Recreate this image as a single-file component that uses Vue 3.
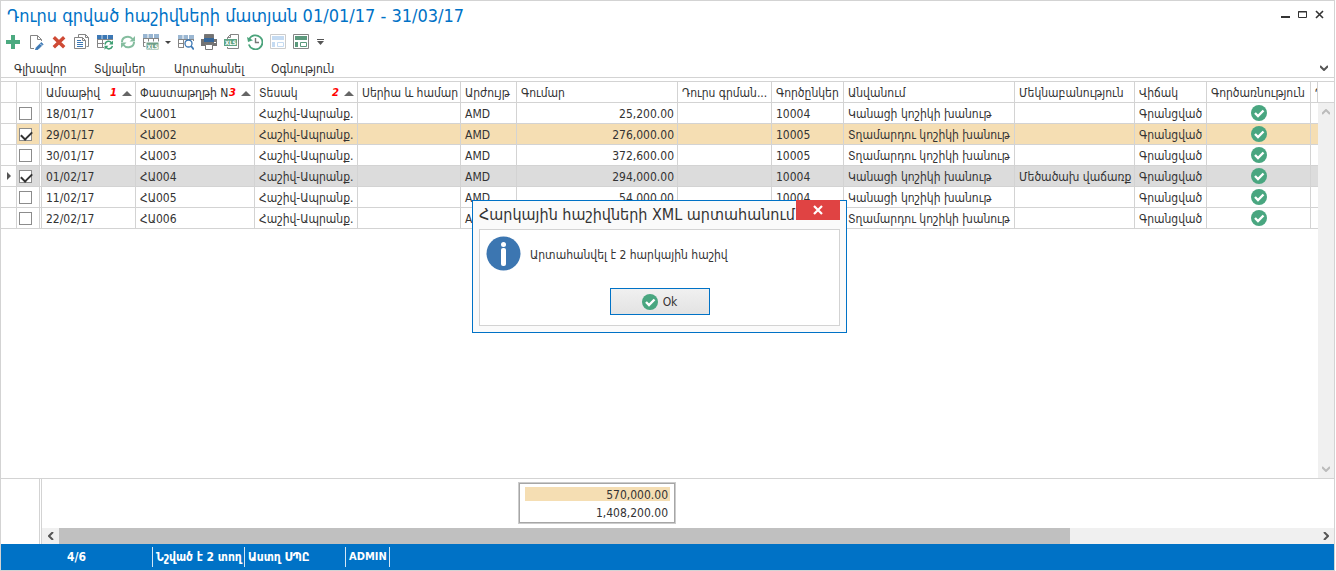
<script setup>
import { ref } from 'vue'

const columns = [
  { key: 'date', label: 'Ամսաթիվ', sort: 1 },
  { key: 'doc', label: 'Փաստաթղթի N', sort: 3 },
  { key: 'type', label: 'Տեսակ', sort: 2 },
  { key: 'serial', label: 'Սերիա և համար' },
  { key: 'currency', label: 'Արժույթ' },
  { key: 'amount', label: 'Գումար' },
  { key: 'written', label: 'Դուրս գրման...' },
  { key: 'partner', label: 'Գործընկեր' },
  { key: 'name', label: 'Անվանում' },
  { key: 'comment', label: 'Մեկնաբանություն' },
  { key: 'state', label: 'Վիճակ' },
  { key: 'operation', label: 'Գործառնություն' },
  { key: 'tail', label: 'Դ' }
]

const women = { partner: '10004', name: 'Կանացի կոշիկի խանութ' }
const men = { partner: '10005', name: 'Տղամարդու կոշիկի խանութ' }
const common = { type: 'Հաշիվ-Ապրանք.', currency: 'AMD', state: 'Գրանցված', serial: '', written: '', comment: '', tail: '' }

const rows = ref([
  { ...common, date: '18/01/17', doc: 'ՀԱ001', amount: '25,200.00', ...women, checked: false },
  { ...common, date: '29/01/17', doc: 'ՀԱ002', amount: '276,000.00', ...men, checked: true },
  { ...common, date: '30/01/17', doc: 'ՀԱ003', amount: '372,600.00', ...men, checked: false },
  { ...common, date: '01/02/17', doc: 'ՀԱ004', amount: '294,000.00', ...women, checked: true, current: true, comment: 'Մեծածախ վաճառք' },
  { ...common, date: '11/02/17', doc: 'ՀԱ005', amount: '54,000.00', ...women, checked: false },
  { ...common, date: '22/02/17', doc: 'ՀԱ006', amount: '386,400.00', ...men, checked: false }
])
</script>

<template>
  <div class="window">
    <header class="titlebar">
      <h1>Դուրս գրված հաշիվների մատյան 01/01/17 - 31/03/17</h1>
      <div class="window-buttons">
        <button aria-label="Minimize"><svg width="9" height="9"><path d="M0 7h9" stroke="#333" stroke-width="2" /></svg></button>
        <button aria-label="Maximize"><svg width="9" height="9"><path d="M.5 1.5h8v6h-8zM0 2h9" fill="none" stroke="#333" /></svg></button>
        <button aria-label="Close"><svg width="9" height="9"><path d="M1 1l7 7M8 1l-7 7" stroke="#333" stroke-width="1.6" /></svg></button>
      </div>
    </header>

    <div class="toolbar">
      <button aria-label="Add"><svg class="icon" viewBox="0 0 16 16"><path d="M6 1h4v5h5v4h-5v5h-4v-5h-5v-4h5z" fill="#4caa80" /></svg></button>
      <button aria-label="Edit"><svg class="icon" viewBox="0 0 16 16" fill="none"><path d="M6 14.5H2.500V1.500h7l4 4V7M9.500 1.500v4h4" stroke="#858585" /><path d="M8.300 13.500L13.300 8.500l1.800 1.800-5 5-2.700.8z" fill="#3c78b5" stroke="#3c78b5" stroke-width=".8" /><path d="M12 9.600l2 2" stroke="#fff" stroke-width=".8" /></svg></button>
      <button aria-label="Delete"><svg class="icon" viewBox="0 0 16 16"><path d="M2.800 3.200l10.400 10M13.200 3.200l-10.400 10" stroke="#cf4a35" stroke-width="3.400" /></svg></button>
      <button aria-label="Copy"><svg class="icon" viewBox="0 0 16 16" fill="none"><path d="M4.500 3V.500h7l3 3v9h-2M11.500.500v3h3" stroke="#858585" /><path d="M.500 3.500h8l3 3v8h-11zM8.500 3.500v3h3" fill="#fff" stroke="#858585" /><path d="M3 6.500h4M3 8.500h6M3 10.500h6M3 12.500h6" stroke="#3c78b5" /></svg></button>
      <button aria-label="Refresh table"><svg class="icon" viewBox="0 0 16 16" fill="none"><path d="M.500 1.500h15v12h-15zM.500 5.500h15M.500 9.500h15M5.500 1.500v12M10.500 1.500v12" stroke="#858585" /><path d="M0 1h16v4h-16z" fill="#3c78b5" /><path d="M5 1v4M10.500 1v4" stroke="#c7d9ea" /><path d="M7 6h9v10h-9z" fill="#fff" /><path d="M8 10.500c.7-4 5-4 6.500-1.500M15.500 12c-1 3.500-5 3.700-6.500 1.200" stroke="#3e9f73" stroke-width="1.500" /><path d="M16 6.500v4h-4zM7.500 15.700v-4h4z" fill="#3e9f73" /></svg></button>
      <button aria-label="Refresh"><svg class="icon" viewBox="0 0 16 16" fill="none"><path d="M2 8c0-5.500 7.500-7 10.500-3M14 8c0 5.500-7.500 7-10.500 3" stroke="#85bd9f" stroke-width="2" /><path d="M15 2v5.500h-5.500zM1 14v-5.500h5.500z" fill="#85bd9f" /></svg></button>
      <button class="with-arrow" aria-label="Export table"><svg class="icon" viewBox="0 0 16 16" fill="none"><path d="M.500.500h15v12h-15zM.500 4.500h15M.500 8.500h15M5.500.500v12M10.500.500v12" stroke="#858585" /><path d="M0 0h16v4h-16z" fill="#98b5d1" /><path d="M5 0v4M10.500 0v4" stroke="#fff" /><path d="M3 8h13v8h-13z" fill="#6f9f86" stroke="#fff" /><text x="4" y="15" font-size="6" font-weight="700" fill="#fff">XLS</text></svg><svg class="arrow" viewBox="0 0 12 16"><path d="M6 7h6l-3 3z" fill="#444" /></svg></button>
      <button aria-label="Find in table"><svg class="icon" viewBox="0 0 16 16" fill="none"><path d="M.500 1.500h15v12h-15zM.500 5.500h15M.500 9.500h15M5.500 1.500v12M10.500 1.500v12" stroke="#858585" /><path d="M0 1h16v4h-16z" fill="#9bb7d2" /><path d="M5 1v4M10.500 1v4" stroke="#fff" /><path d="M6 7h10v9h-10z" fill="#fff" /><circle cx="10.500" cy="9.500" r="3.500" fill="#fff" stroke="#3c78b5" stroke-width="1.300" /><path d="M13 12l2.800 3.500" stroke="#3c78b5" stroke-width="1.800" /></svg></button>
      <button aria-label="Print"><svg class="icon" viewBox="0 0 16 16"><path d="M3.500.500h9v4h-9z" fill="#737373" stroke="#777" /><path d="M0 5h16v7h-16z" fill="#737373" /><path d="M3 4h10v4h-10z" fill="#35679b" /><path d="M4.500 10.500h7v5h-7z" fill="#fff" stroke="#777" /><path d="M13 8.500h2" stroke="#fff" /></svg></button>
      <button aria-label="Export to XLS"><svg class="icon" viewBox="0 0 16 16" fill="none"><path d="M3.500 5V3.500l3-3h8v14h-11V13M3.500 3.500h3v-3" stroke="#858585" /><path d="M0 5h13v7H0z" fill="#5fa383" /><text x="1" y="11" font-size="6" font-weight="700" fill="#fff">XLS</text></svg></button>
      <button aria-label="History"><svg class="icon" viewBox="0 0 16 16" fill="none"><path d="M2.200 5.200A7 7 0 1 1 1.800 10.500" stroke="#4ba37b" stroke-width="1.800" /><path d="M0 3l1 5 5-1.800z" fill="#4ba37b" /><path d="M8.500 4v4.500H12" stroke="#777" stroke-width="1.400" /></svg></button>
      <button aria-label="Preview" disabled><svg class="icon" viewBox="0 0 16 16" fill="none"><path d="M.500.500h15v14h-15z" stroke="#ccc" /><path d="M2 2h12v4h-12z" fill="#c5dbf2" /><path d="M2 8h3v5h-3z" fill="#c5dbf2" /><path d="M7.500 8.500h6v4h-6z" stroke="#c5dbf2" /></svg></button>
      <button aria-label="Layout"><svg class="icon" viewBox="0 0 16 16" fill="none"><path d="M.500.500h15v14h-15z" stroke="#858585" /><path d="M2 2h12v4h-12z" fill="#5b997c" /><path d="M2 8h3v5h-3z" fill="#5b997c" /><path d="M7.500 8.500h6v4h-6z" stroke="#5b997c" /></svg></button>
      <button aria-label="More commands"><svg class="icon" viewBox="0 0 16 16"><path d="M1 5.500h7" stroke="#555" /><path d="M1 7h7l-3.500 4z" fill="#555" /></svg></button>
    </div>

    <nav class="menu">
      <div><button>Գլխավոր</button></div>
      <div><button>Տվյալներ</button></div>
      <div><button>Արտահանել</button></div>
      <div><button>Օգնություն</button></div>
      <button class="expand" aria-label="Expand ribbon"><svg width="8" height="6"><path d="M0 1l4 4 4-4" fill="none" stroke="#555" stroke-width="2" /></svg></button>
    </nav>

    <main class="grid">
      <div class="table-wrap">
        <table>
          <colgroup>
            <col class="w-mark" /><col class="w-check" />
            <col v-for="c in columns" :key="c.key" :class="'w-' + c.key" />
          </colgroup>
          <thead>
            <tr>
              <th></th>
              <th class="check"></th>
              <th v-for="c in columns" :key="c.key" :class="'c-' + c.key">
                <div class="head">
                  <span class="label">{{ c.label }}</span>
                  <span v-if="c.sort" class="order">{{ c.sort }}</span>
                  <svg v-if="c.sort" class="sort" width="10" height="5"><path d="M0 5l5-5 5 5z" fill="#666" /></svg>
                </div>
              </th>
            </tr>
          </thead>
          <tbody>
            <tr v-for="r in rows" :key="r.doc" :class="{ selected: r.checked && !r.current, current: r.current }">
              <td class="mark"><svg v-if="r.current" width="4" height="8"><path d="M0 0l4 4-4 4z" fill="#555" /></svg></td>
              <td class="check"><input v-model="r.checked" type="checkbox" :aria-label="r.doc" /></td>
              <td v-for="c in columns" :key="c.key" :class="'c-' + c.key">
                <svg v-if="c.key === 'operation'" class="icon" viewBox="0 0 16 16"><circle cx="8" cy="8" r="8" fill="#49a680" /><path d="M4 8l3 3 5.500-5.500" fill="none" stroke="#fff" stroke-width="2.400" /></svg>
                <template v-else>{{ r[c.key] }}</template>
              </td>
            </tr>
          </tbody>
        </table>
      </div>
      <div class="side">
        <div class="side-head"></div>
        <div class="v-scroll">
          <svg width="8" height="6"><path d="M0 5l4-4 4 4" fill="none" stroke="#bbb" stroke-width="2" /></svg>
          <svg width="8" height="6"><path d="M0 1l4 4 4-4" fill="none" stroke="#bbb" stroke-width="2" /></svg>
        </div>
      </div>
    </main>

    <section class="totals">
      <div class="gutter"></div>
      <div class="totals-body">
        <div class="summary">
          <div class="picked">570,000.00</div>
          <div>1,408,200.00</div>
        </div>
        <div class="h-scroll">
          <svg width="6" height="8"><path d="M5 0l-4 4 4 4" fill="none" stroke="#555" stroke-width="2" /></svg>
          <div class="track"><div class="thumb"></div></div>
          <svg width="6" height="8"><path d="M1 0l4 4-4 4" fill="none" stroke="#555" stroke-width="2" /></svg>
        </div>
      </div>
    </section>

    <footer class="status">
      <span class="position">4/6</span>
      <span class="marked">Նշված է 2 տող</span>
      <span class="company">Աստղ ՍՊԸ</span>
      <span class="user">ADMIN</span>
    </footer>

    <div class="dialog" role="dialog" aria-labelledby="dialog-title">
      <div class="dialog-bar">
        <h2 id="dialog-title">Հարկային հաշիվների XML արտահանում</h2>
        <button class="close" aria-label="Close dialog"><svg width="10" height="10"><path d="M1 1l8 8M9 1l-8 8" stroke="#fff" stroke-width="2.200" /></svg></button>
      </div>
      <div class="dialog-body">
        <div class="message">
          <svg width="35" height="35" viewBox="0 0 35 35"><circle cx="17.500" cy="17.500" r="17" fill="#3c76b1" /><circle cx="17.500" cy="8.500" r="2.500" fill="#fff" /><rect x="15" y="12" width="5" height="18" rx="2" fill="#fff" /></svg>
          <p>Արտահանվել է 2 հարկային հաշիվ</p>
        </div>
        <button class="ok"><svg class="icon" viewBox="0 0 16 16"><circle cx="8" cy="8" r="8" fill="#49a680" /><path d="M4 8l3 3 5.500-5.500" fill="none" stroke="#fff" stroke-width="2.400" /></svg>Ok</button>
      </div>
    </div>
  </div>
</template>

<style>
body { margin: 0; background: #fff; }
</style>

<style scoped>
* { box-sizing: border-box; }
.window {
  position: relative;
  display: flex;
  flex-direction: column;
  min-height: 100vh;
  margin-right: 1px;
  border: 1px solid #d3d3d3;
  overflow: hidden;
  color: #333;
  font: 12px/16px "DejaVu Sans Condensed", "DejaVu Sans", sans-serif;
}
button { padding: 0; border: 0; background: none; color: inherit; font: inherit; }
svg { display: block; flex: none; }
.icon { width: 16px; height: 16px; }
h1, h2, p { margin: 0; font-weight: 400; white-space: nowrap; }

.titlebar { display: flex; justify-content: space-between; height: 30px; padding: 3px 10px 0 6px; }
h1 { color: #0072c6; font-size: 18px; line-height: 24px; }
.window-buttons { display: flex; gap: 8px; height: 20px; align-items: center; }

.toolbar { display: flex; gap: 7px; height: 22px; padding: 3px 4px; }
.with-arrow { display: flex; }
.arrow { width: 12px; height: 16px; }

.menu { display: grid; grid-template-columns: 80px 80px 97px 1fr auto; align-items: end; padding: 7px 6px 0 13px; border-bottom: 1px solid #d3d3d3; height: 25px; }
.expand { padding-bottom: 6px; }

.grid { display: flex; flex: 1; margin-top: 3px; border-top: 1px solid #d3d3d3; }
.table-wrap { flex: 1; min-width: 0; overflow: hidden; }
table { width: 100%; table-layout: fixed; border-spacing: 0; }
.w-mark { width: 16px; }
.w-check { width: 25px; }
.w-date, .w-written { width: 94px; }
.w-doc { width: 119px; }
.w-type, .w-serial { width: 103px; }
.w-currency { width: 56px; }
.w-amount { width: 161px; }
.w-partner, .w-state { width: 72px; }
.w-name { width: 171px; }
.w-comment { width: 120px; }
.w-operation { width: 104px; }
th, td {
  height: 21px;
  padding: 2px 3px 0 4px;
  border: 0 solid #d3d3d3;
  border-width: 0 1px 1px 0;
  overflow: hidden;
  background-clip: padding-box;
  font-weight: 400;
  line-height: 18px;
  text-align: left;
  white-space: nowrap;
}
th { padding-right: 0; }
.check { padding: 0 0 0 2px; border-right: 3px double #d3d3d3; }
.mark { padding: 0 0 0 6px; }
td.c-tail { border-right: 0; }
td.c-amount { text-align: right; }
td.c-operation { padding-top: 0; }
td.c-operation .icon { margin: 0 auto; }
.selected td:not(.mark) { background-color: #f5deb3; }
.current td:not(.mark) { background-color: #dcdcdc; }
.head { display: flex; align-items: center; }
.label { flex: 1; min-width: 0; overflow: hidden; }
.order { margin-right: 5px; color: #f00; font: italic 700 10px/16px "DejaVu Sans", sans-serif; }
.sort { margin-right: 3px; }
input {
  display: block;
  appearance: none;
  width: 13px;
  height: 13px;
  margin: 0;
  border: 1px solid #8c8c8c;
  background: #fff;
}
input:checked::after {
  content: "";
  display: block;
  width: 9px;
  height: 5px;
  margin: 2px 1px;
  border: solid #333;
  border-width: 0 0 2px 2px;
  transform: rotate(-45deg);
}

.side { display: flex; flex-direction: column; width: 16px; }
.side-head { height: 21px; border-bottom: 1px solid #d3d3d3; }
.v-scroll { display: flex; flex: 1; flex-direction: column; align-items: center; justify-content: space-between; padding: 6px 0; background: #f0f0f0; }

.totals { display: flex; height: 66px; border-top: 1px solid #d3d3d3; }
.gutter { width: 41px; border-right: 3px double #d3d3d3; }
.totals-body { display: flex; flex: 1; flex-direction: column; justify-content: space-between; padding-top: 3px; }
.summary { width: 158px; height: 42px; margin-left: 476px; padding: 3px 4px 3px 5px; border: 1px solid #ccc; outline: 1px solid #a6a6a6; outline-offset: -2px; text-align: right; }
.summary div { height: 14px; margin: 1px 1px 4px; padding-right: 2px; line-height: 16px; }
.picked { background: #f5deb3; }
.h-scroll { display: flex; align-items: center; height: 16px; padding: 0 5px 0 6px; background: #f0f0f0; }
.track { flex: 1; height: 16px; margin: 0 5px; }
.thumb { width: 80.3%; height: 16px; background: #c0c0c0; }

.status { display: flex; align-items: center; height: 26px; background: #0072c6; color: #fff; font-weight: 700; white-space: nowrap; }
.status span { height: 20px; padding-left: 3px; border-right: 1px solid #d3e6f5; line-height: 20px; }
.status .position { width: 152px; padding: 0; text-align: center; }
.marked { width: 92px; }
.company { width: 101px; }
.user { width: 44px; font-size: 11px; }

.dialog { position: absolute; top: 199px; left: 471px; width: 375px; padding: 0 6px 6px; border: 1px solid #0072c6; background: #fafafa; }
.dialog-bar { display: flex; justify-content: space-between; height: 28px; }
h2 { font-size: 16px; line-height: 28px; }
.close { display: grid; place-items: center; width: 44px; height: 20px; margin-top: -1px; background: #e04343; }
.dialog-body { display: flex; flex-direction: column; align-items: center; height: 97px; border: 1px solid #d3d3d3; background: #fff; }
.message { display: flex; align-items: center; align-self: stretch; gap: 9px; padding: 6px; }
.message p { line-height: 18px; padding-top: 2px; }
.ok { display: flex; align-items: center; justify-content: center; gap: 5px; width: 100px; height: 27px; margin-top: 11px; border: 1px solid #0072c6; background: linear-gradient(#f0f0f0, #e3e3e3); }
</style>
